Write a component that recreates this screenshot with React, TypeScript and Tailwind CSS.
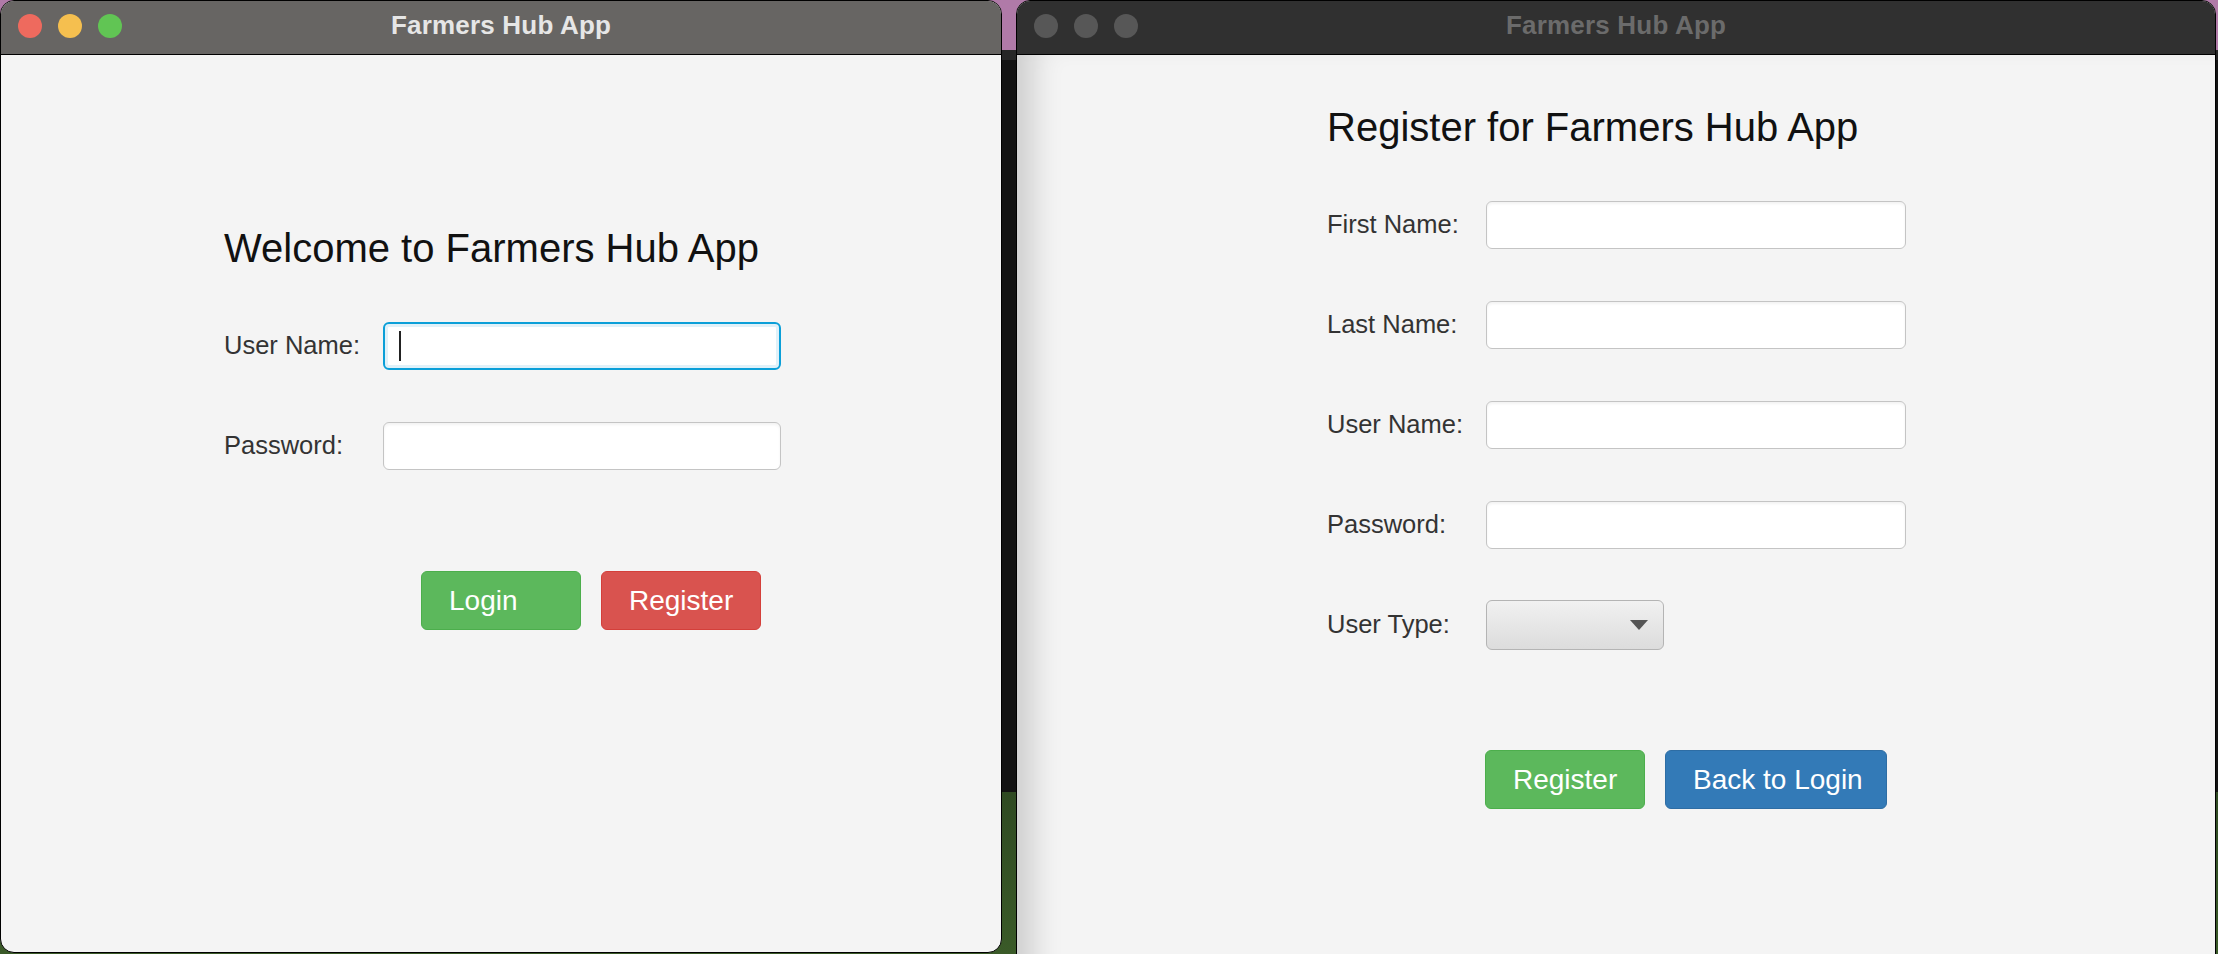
import React from 'react';

type TitleBarProps = {
  title: string;
  bg: string;
  text: string;
  lights: string[];
};

const TitleBar: React.FC<TitleBarProps> = ({ title, bg, text, lights }) => (
  <div className={`relative h-[54px] shrink-0 border-b border-black flex items-center justify-center ${bg}`}>
    <div className="absolute left-[17px] top-[13px] flex gap-[16px]">
      {lights.map((c, i) => (
        <span key={i} className={`block w-[24px] h-[24px] rounded-full ${c}`} />
      ))}
    </div>
    <span className={`pb-[5px] text-[26px] font-bold tracking-[0.2px] ${text}`}>{title}</span>
  </div>
);

const Field: React.FC<{ width: string; focused?: boolean }> = ({ width, focused }) =>
  focused ? (
    <div
      className={`${width} h-[48px] rounded-[6px] border-2 border-[#0b9fd8] bg-white shadow-[inset_0_0_0_3px_#e0f1f9] flex items-center pl-[14px]`}
    >
      <span className="block w-[2px] h-[30px] bg-[#222]" />
    </div>
  ) : (
    <div
      className={`${width} h-[48px] rounded-[6px] border-[1.5px] border-[#c4c4c4] bg-white shadow-[inset_0_2px_3px_rgba(0,0,0,0.05)]`}
    />
  );

const Row: React.FC<{ label: string; children: React.ReactNode }> = ({ label, children }) => (
  <div className="flex items-center h-[48px]">
    <span className="w-[159px] shrink-0 text-[25.5px] leading-none text-[#333]">{label}</span>
    {children}
  </div>
);

const Button: React.FC<{ label: string; className: string }> = ({ label, className }) => (
  <button
    type="button"
    className={`h-[59px] rounded-[6px] border pl-[27px] flex items-center text-[28px] leading-none text-white ${className}`}
  >
    {label}
  </button>
);

const LoginWindow = () => (
  <div className="w-[1002px] h-[953px] shrink-0 rounded-[14px] border border-black overflow-hidden flex flex-col bg-[#f4f4f4]">
    <TitleBar
      title="Farmers Hub App"
      bg="bg-[#676563]"
      text="text-[#e6e6e6]"
      lights={['bg-[#ee6a5e]', 'bg-[#f5bf4f]', 'bg-[#61c554]']}
    />
    <div className="flex-1 pt-[173px] pl-[223px]">
      <h1 className="text-[40px] leading-[40px] text-[#111]">Welcome to Farmers Hub App</h1>
      <div className="mt-[54px] flex flex-col gap-[52px]">
        <Row label="User Name:">
          <Field width="w-[398px]" focused />
        </Row>
        <Row label="Password:">
          <Field width="w-[398px]" />
        </Row>
      </div>
      <div className="mt-[101px] ml-[197px] flex gap-[20px]">
        <Button label="Login" className="w-[160px] bg-[#5cb85c] border-[#4cae4c]" />
        <Button label="Register" className="w-[160px] bg-[#d9534f] border-[#d43f3a]" />
      </div>
    </div>
  </div>
);

const RegisterWindow = () => (
  <div className="w-[1200px] h-[980px] shrink-0 rounded-t-[14px] border border-black overflow-hidden flex flex-col bg-[#f4f4f4]">
    <TitleBar
      title="Farmers Hub App"
      bg="bg-[#303030]"
      text="text-[#6b6b6b]"
      lights={['bg-[#575757]', 'bg-[#575757]', 'bg-[#575757]']}
    />
    <div className="flex-1 pt-[52px] pl-[310px] shadow-[inset_34px_0_30px_-18px_rgba(0,0,0,0.16)]">
      <h1 className="text-[40px] leading-[40px] text-[#111]">Register for Farmers Hub App</h1>
      <div className="mt-[54px] flex flex-col gap-[52px]">
        <Row label="First Name:">
          <Field width="w-[420px]" />
        </Row>
        <Row label="Last Name:">
          <Field width="w-[420px]" />
        </Row>
        <Row label="User Name:">
          <Field width="w-[420px]" />
        </Row>
        <Row label="Password:">
          <Field width="w-[420px]" />
        </Row>
        <Row label="User Type:">
          <div className="w-[178px] h-[50px] shrink-0 rounded-[6px] border-[1.5px] border-[#b4b4b4] bg-[linear-gradient(to_bottom,#f1f1f1,#dcdcdc)] flex items-center justify-end pr-[15px]">
            <svg width="18" height="10" viewBox="0 0 18 10">
              <path d="M0 0 L18 0 L9 10 Z" fill="#555" />
            </svg>
          </div>
        </Row>
      </div>
      <div className="mt-[101px] ml-[158px] flex gap-[20px]">
        <Button label="Register" className="w-[160px] bg-[#5cb85c] border-[#4cae4c]" />
        <Button label="Back to Login" className="w-[222px] bg-[#337ab7] border-[#2e6da4]" />
      </div>
    </div>
  </div>
);

export default function App() {
  return (
    <div className="w-[2218px] h-[954px] overflow-hidden flex font-['Liberation_Sans',Arial,sans-serif] bg-[linear-gradient(to_bottom,#b07aa8_0,#b07aa8_50px,#262626_50px,#262626_60px,#121212_60px,#121212_792px,#2f4a22_792px,#3a5a28_954px)]">
      <LoginWindow />
      <div className="w-[14px] shrink-0" />
      <RegisterWindow />
    </div>
  );
}
